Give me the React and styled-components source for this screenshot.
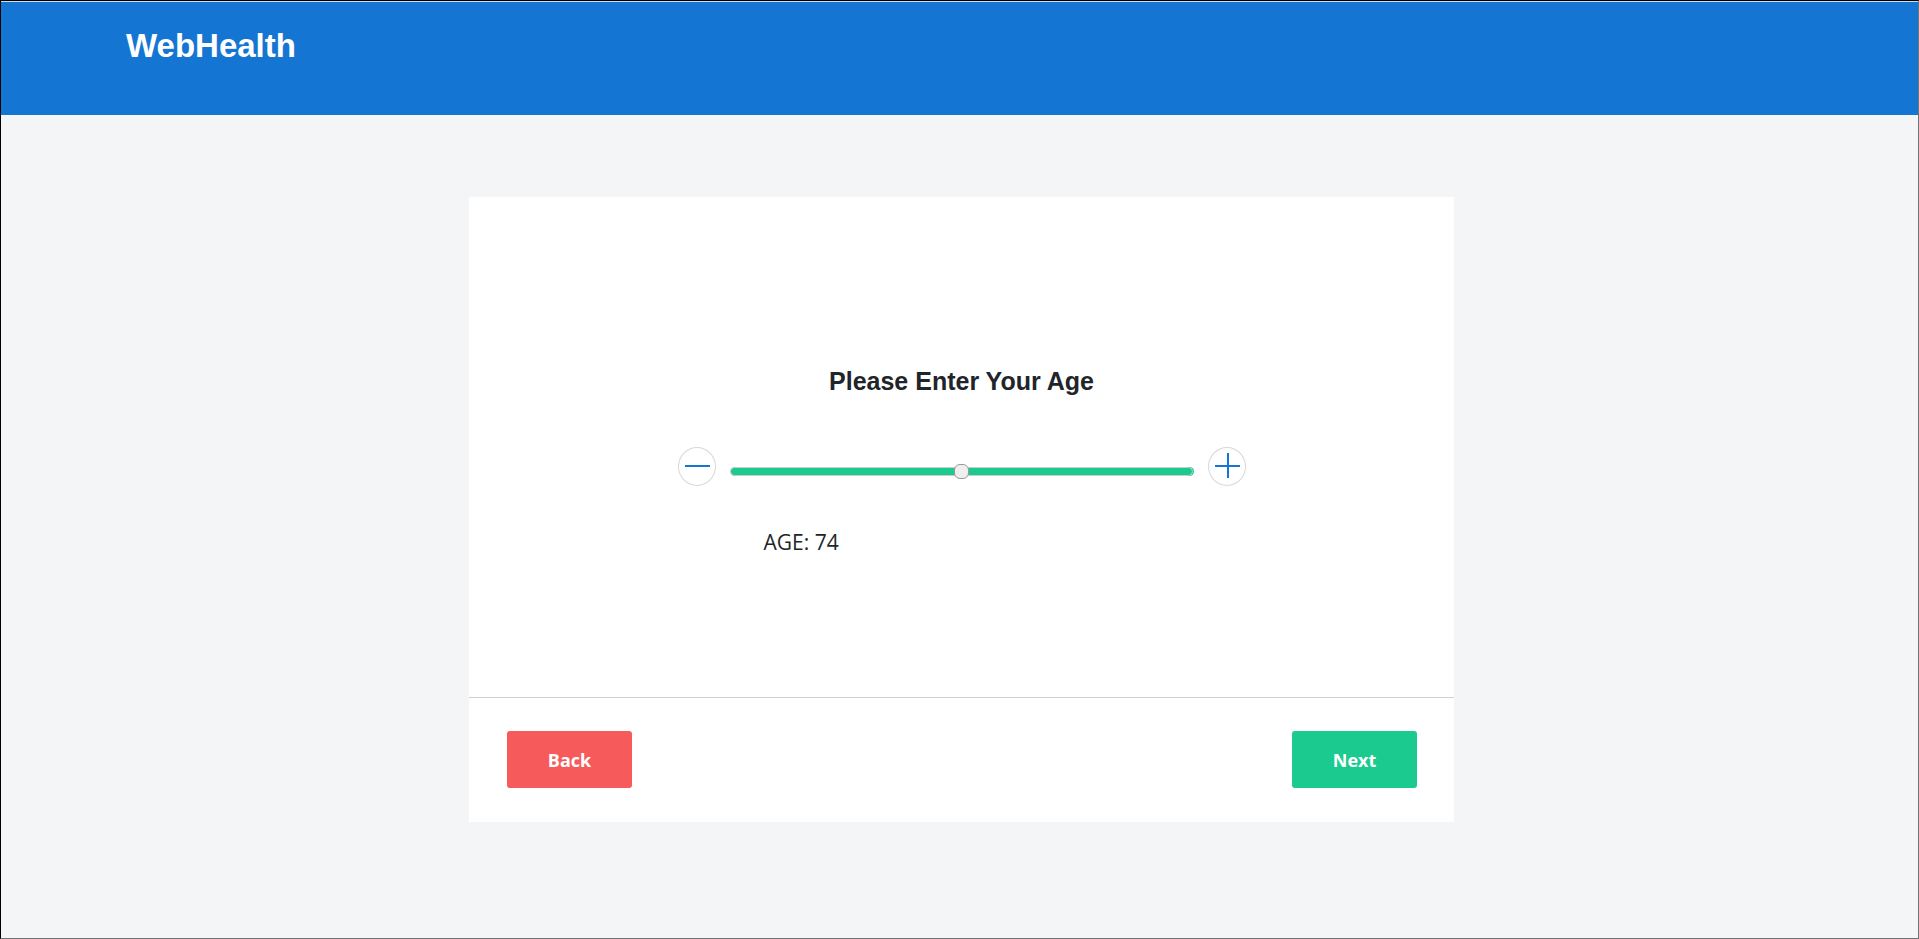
import React, { useState } from "react";
import styled, { createGlobalStyle } from "styled-components";

const MIN_AGE = 0;
const MAX_AGE = 148;

const GlobalStyle = createGlobalStyle`
  *, *::before, *::after { box-sizing: border-box; }
  body {
    margin: 0;
    background: #f3f5f7;
    color: #212529;
    font-family: "Open Sans", "Noto Sans", sans-serif;
  }
`;

const Page = styled.div`
  min-height: 100vh;
  display: flex;
  flex-direction: column;
  border: 1px solid #000;
  border-right-color: #727375;
  border-bottom-color: #727375;
`;

const Header = styled.header`
  min-height: 114px;
  padding: 24px 125px;
  background: #1476d2;
  border-top: 1px solid #d5dbe6;
`;

const Brand = styled.a`
  color: #fff;
  font: 700 33px/40px "Liberation Sans", Arial, sans-serif;
  text-decoration: none;
`;

const Main = styled.main`
  flex: 1;
  display: flex;
  justify-content: center;
  align-items: flex-start;
  padding: 82px 24px 82px 28px;
`;

const Card = styled.form`
  width: 100%;
  max-width: 985px;
  background: #fff;
`;

const Question = styled.section`
  min-height: 500px;
  padding: 168px 24px 24px;
  display: flex;
  flex-direction: column;
  align-items: center;
`;

const Title = styled.h1`
  margin: 0 0 50px;
  font: 700 25px/32px "Liberation Sans", Arial, sans-serif;
`;

const Picker = styled.div`
  width: 100%;
  max-width: 568px;
`;

const SliderRow = styled.div`
  display: flex;
  align-items: flex-start;
  gap: 14px;
`;

const StepButton = styled.button`
  flex: none;
  display: grid;
  place-items: center;
  width: 38px;
  height: 39px;
  padding: 0;
  border: 1px solid #d8d8d8;
  border-radius: 50%;
  background: #fff;
  color: #1476d2;
  cursor: pointer;
`;

const Slider = styled.input`
  appearance: none;
  flex: 1;
  min-width: 0;
  height: 15px;
  margin: 17px 0 0;
  background: transparent;
  cursor: pointer;

  &::-webkit-slider-runnable-track {
    height: 9px;
    margin-right: 1px;
    border: 1px solid #ccc;
    border-radius: 5px;
    background: #1bca8f;
    box-shadow: 1px 0 0 #1bca8f;
  }
  &::-webkit-slider-thumb {
    appearance: none;
    width: 15px;
    height: 15px;
    margin-top: -4px;
    border: 1px solid #999;
    border-radius: 6px;
    background: #efefef;
  }
`;

const AgeLabel = styled.label`
  display: block;
  margin: 40px 0 0 86px;
  font-size: 21px;
  line-height: 32px;
`;

const Actions = styled.footer`
  display: flex;
  justify-content: space-between;
  padding: 33px 37px 34px 38px;
  border-top: 1px solid #d0d0d0;
`;

const ActionButton = styled.button`
  width: 125px;
  height: 57px;
  border: 0;
  border-radius: 3px;
  background: ${({ $tone }) => ($tone === "back" ? "#f65a5b" : "#1bca8f")};
  color: #fff;
  font: 700 18px/24px "Open Sans", "Noto Sans", sans-serif;
  cursor: pointer;
`;

function StepIcon({ plus }) {
  return (
    <svg width="26" height="26" viewBox="0 0 26 26" fill="currentColor" overflow="visible" aria-hidden="true">
      <rect x="1" y="11" width="25" height="2" />
      {plus && <rect x="13" y="-1" width="2" height="25" />}
    </svg>
  );
}

export default function App() {
  const [age, setAge] = useState(74);
  const step = (by) => setAge((a) => Math.min(MAX_AGE, Math.max(MIN_AGE, a + by)));

  return (
    <>
      <GlobalStyle />
      <Page>
        <Header>
          <Brand href="#">WebHealth</Brand>
        </Header>
        <Main>
          <Card onSubmit={(e) => e.preventDefault()}>
            <Question>
              <Title>Please Enter Your Age</Title>
              <Picker>
                <SliderRow>
                  <StepButton type="button" aria-label="Decrease age" onClick={() => step(-1)}>
                    <StepIcon />
                  </StepButton>
                  <Slider
                    id="age"
                    type="range"
                    min={MIN_AGE}
                    max={MAX_AGE}
                    value={age}
                    onChange={(e) => setAge(Number(e.target.value))}
                  />
                  <StepButton type="button" aria-label="Increase age" onClick={() => step(1)}>
                    <StepIcon plus />
                  </StepButton>
                </SliderRow>
                <AgeLabel htmlFor="age">AGE: {age}</AgeLabel>
              </Picker>
            </Question>
            <Actions>
              <ActionButton type="button" $tone="back">Back</ActionButton>
              <ActionButton type="submit" $tone="next">Next</ActionButton>
            </Actions>
          </Card>
        </Main>
      </Page>
    </>
  );
}
